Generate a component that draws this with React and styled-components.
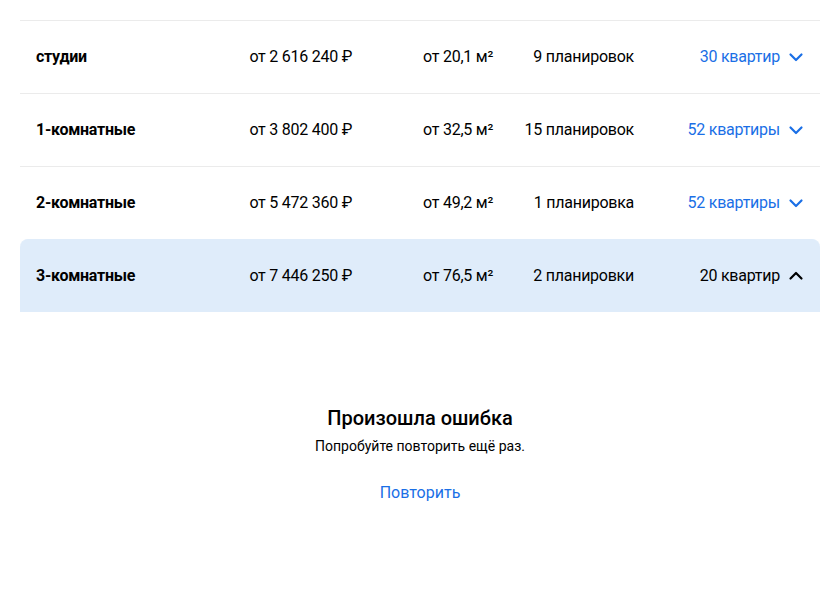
import React from 'react';
import styled, { createGlobalStyle } from 'styled-components';

const GlobalStyle = createGlobalStyle`
  body {
    margin: 0;
    background: #fff;
    font-family: Roboto, "Noto Sans", sans-serif;
    color: #000;
  }
`;

const Page = styled.div`
  padding: 20px 20px 0;
`;

const Table = styled.div`
  display: flex;
  flex-direction: column;
`;

const Row = styled.div`
  display: grid;
  grid-template-columns: 160px 156px 141px 141px 1fr;
  align-items: center;
  height: 72px;
  padding: 0 16px;
  border-top: 1px solid ${({ $open }) => ($open ? '#dfecfa' : '#ebebeb')};
  background: ${({ $open }) => ($open ? '#dfecfa' : 'transparent')};
  border-radius: ${({ $open }) => ($open ? '8px 8px 0 0' : '0')};
  font-size: 16px;
  line-height: 20px;
  letter-spacing: -0.25px;
`;

const Name = styled.div`
  font-weight: 700;
`;

const Cell = styled.div`
  text-align: right;
  white-space: nowrap;
`;

const Flats = styled.button`
  display: flex;
  align-items: center;
  justify-content: flex-end;
  gap: 8px;
  border: none;
  background: none;
  padding: 0;
  font: inherit;
  letter-spacing: inherit;
  color: ${({ $open }) => ($open ? '#000' : '#1a6fe6')};
  cursor: pointer;
  white-space: nowrap;
`;

const Chevron = styled.svg`
  width: 16px;
  height: 16px;
  transform: ${({ $up }) => ($up ? 'rotate(180deg)' : 'none')};
`;

const ErrorBox = styled.div`
  display: flex;
  flex-direction: column;
  align-items: center;
  margin-top: 93px;
`;

const ErrorTitle = styled.h2`
  margin: 0;
  font-size: 20px;
  line-height: 26px;
  font-weight: 500;
`;

const ErrorText = styled.p`
  margin: 6px 0 0;
  font-size: 14px;
  line-height: 18px;
`;

const RetryButton = styled.button`
  margin-top: 28px;
  border: none;
  background: none;
  padding: 0;
  font: inherit;
  font-size: 16px;
  line-height: 20px;
  color: #1a6fe6;
  cursor: pointer;
`;

const rows = [
  { name: 'студии', price: 'от 2 616 240 ₽', area: 'от 20,1 м²', plans: '9 планировок', flats: '30 квартир' },
  { name: '1-комнатные', price: 'от 3 802 400 ₽', area: 'от 32,5 м²', plans: '15 планировок', flats: '52 квартиры' },
  { name: '2-комнатные', price: 'от 5 472 360 ₽', area: 'от 49,2 м²', plans: '1 планировка', flats: '52 квартиры' },
  { name: '3-комнатные', price: 'от 7 446 250 ₽', area: 'от 76,5 м²', plans: '2 планировки', flats: '20 квартир', open: true },
];

function ChevronIcon({ up }) {
  return (
    <Chevron $up={up} viewBox="0 0 16 16" fill="none">
      <path d="M2.5 5.5L8 11l5.5-5.5" stroke="currentColor" strokeWidth="2.2" strokeLinecap="round" strokeLinejoin="round" />
    </Chevron>
  );
}

export default function App() {
  return (
    <Page>
      <GlobalStyle />
      <Table>
        {rows.map(row => (
          <Row key={row.name} $open={row.open}>
            <Name>{row.name}</Name>
            <Cell>{row.price}</Cell>
            <Cell>{row.area}</Cell>
            <Cell>{row.plans}</Cell>
            <Flats $open={row.open}>
              {row.flats}
              <ChevronIcon up={row.open} />
            </Flats>
          </Row>
        ))}
      </Table>
      <ErrorBox>
        <ErrorTitle>Произошла ошибка</ErrorTitle>
        <ErrorText>Попробуйте повторить ещё раз.</ErrorText>
        <RetryButton>Повторить</RetryButton>
      </ErrorBox>
    </Page>
  );
}
